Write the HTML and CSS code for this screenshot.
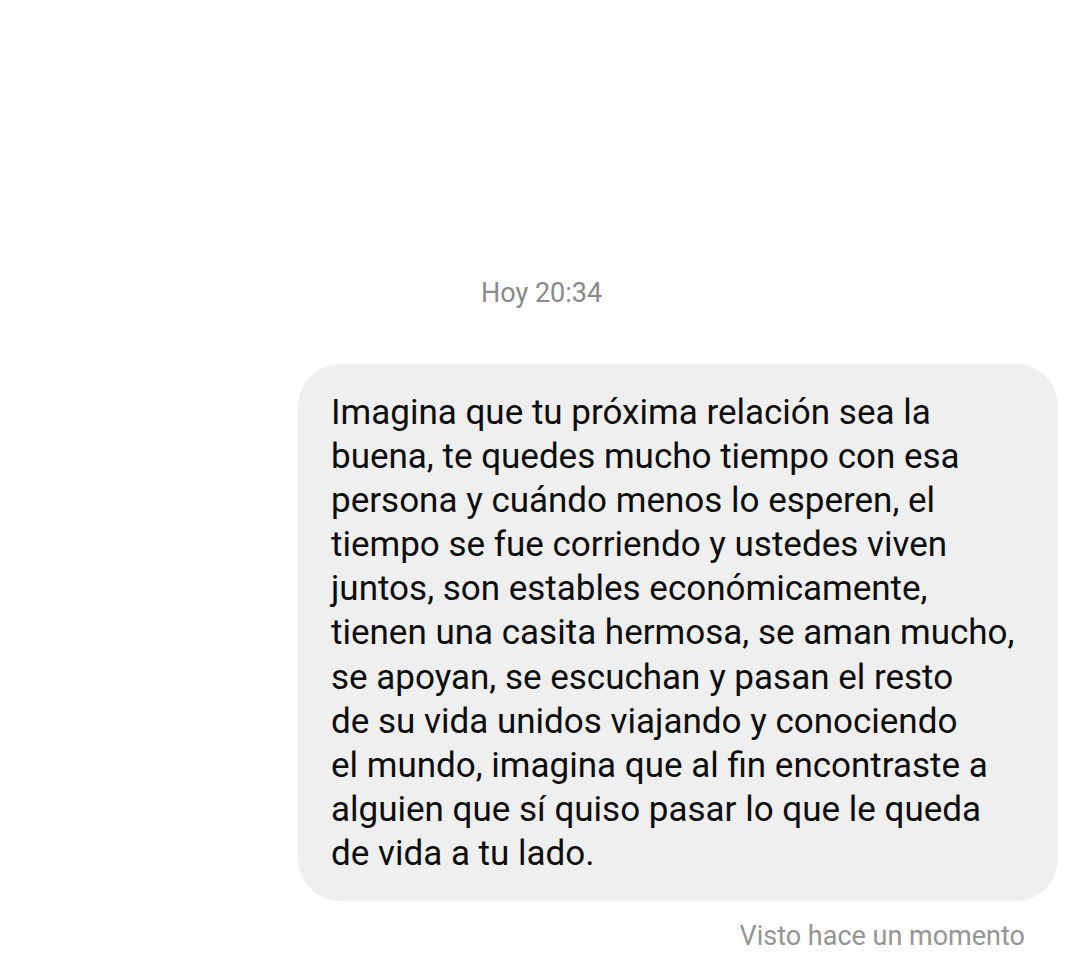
FILE: index.html
```html
<!DOCTYPE html>
<html lang="es">
<head>
<meta charset="utf-8">
<link rel="stylesheet" href="styles.css">
</head>
<body>
<main class="chat">
  <div class="stamp">Hoy 20:34</div>
  <div class="row">
    <div class="bubble">Imagina que tu próxima relación sea la<br>buena, te quedes mucho tiempo con esa<br>persona y cuándo menos lo esperen, el<br>tiempo se fue corriendo y ustedes viven<br>juntos, son estables económicamente,<br>tienen una casita hermosa, se aman mucho,<br>se apoyan, se escuchan y pasan el resto<br>de su vida unidos viajando y conociendo<br>el mundo, imagina que al fin encontraste a<br>alguien que sí quiso pasar lo que le queda<br>de vida a tu lado.</div>
  </div>
  <div class="seen">Visto hace un momento</div>
</main>
</body>
</html>
```
FILE: styles.css
```css
html, body {
  margin: 0;
  padding: 0;
  background: #ffffff;
}
body {
  width: 1080px;
  height: 974px;
  overflow: hidden;
  font-family: Roboto, "Noto Sans", sans-serif;
}
.chat {
  display: flex;
  flex-direction: column;
  padding-top: 277px;
}
.stamp {
  align-self: flex-start;
  margin-left: 481px;
  font-size: 27px;
  line-height: 32px;
  color: #8a8a8a;
}
.row {
  display: flex;
  justify-content: flex-end;
  padding-right: 22px;
  margin-top: 55px;
}
.bubble {
  width: 760px;
  box-sizing: border-box;
  background: #efefef;
  border-radius: 42px;
  padding: 27px 12px 25px 33px;
  font-size: 35px;
  line-height: 44.1px;
  color: #0d0d0d;
  white-space: nowrap;
}
.seen {
  align-self: flex-end;
  margin-right: 55px;
  margin-top: 19px;
  font-size: 27px;
  line-height: 32px;
  color: #959595;
}
```
